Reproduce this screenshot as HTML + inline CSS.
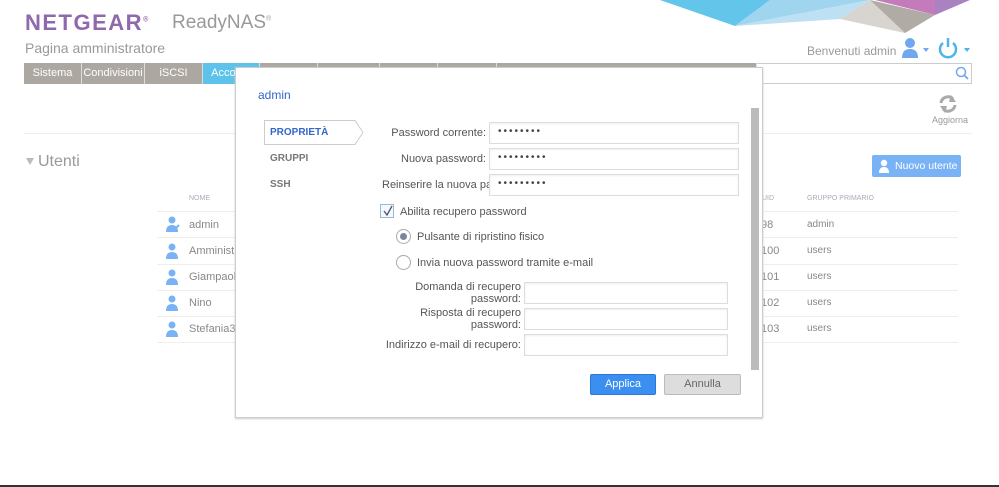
<!DOCTYPE html>
<html><head><meta charset="utf-8"><style>
*{margin:0;padding:0;box-sizing:border-box}
body{width:999px;height:487px;position:relative;overflow:hidden;background:#fff;font-family:"Liberation Sans",sans-serif;color:#777}
.a{position:absolute;white-space:nowrap}
.tab{position:absolute;top:63px;height:21px;background:#aca8a1;color:#fff;font-size:11px;line-height:21px;text-align:center;border-right:1px solid #ddd}
.hl{position:absolute;left:157px;width:801px;height:1px;background:#eee}
.rt{position:absolute;font-size:11px;color:#888}
.lbl{position:absolute;font-size:11px;color:#555;text-align:right;white-space:nowrap}
.inp{position:absolute;border:1px solid #ddd;background:#fff;box-shadow:inset 0 1px 2px #eee;font-size:10px;letter-spacing:2px;padding-left:8px;line-height:18px;color:#444}
.ui{position:absolute;left:166px;width:14px;height:16px}
</style></head><body>
<svg class="a" style="left:0;top:0" width="999" height="40">
<polygon points="660,0 770,0 735,26" fill="#64c5ea"/>
<polygon points="770,0 735,26 870,0" fill="#9fd5ef"/>
<polygon points="735,26 840,19 870,0" fill="#bde0f2"/>
<polygon points="840,19 905,33 870,0" fill="#d8d4cf"/>
<polygon points="870,0 905,33 935,15" fill="#b0aba5"/>
<polygon points="875,0 935,15 935,0" fill="#c37bbc"/>
<polygon points="935,0 935,15 970,0" fill="#a983c0"/>
</svg>
<div class="a" style="left:25px;top:10px;font-size:22px;font-weight:bold;color:#8e6aad;letter-spacing:1.5px">NETGEAR<sup style="font-size:7px">®</sup></div>
<div class="a" style="left:172px;top:12px;font-size:19px;color:#999">ReadyNAS<sup style="font-size:7px">®</sup></div>
<div class="a" style="left:25px;top:40px;font-size:14px;color:#999">Pagina amministratore</div>
<div class="a" style="left:807px;top:44px;font-size:12px;color:#999">Benvenuti admin</div>
<svg class="a" style="left:900px;top:36px" width="72" height="24"><circle cx="10" cy="7" r="5" fill="#6fa8ef"/><path d="M2 22 Q2 13 10 13 Q18 13 18 22Z" fill="#6fa8ef"/><polygon points="23,12 29,12 26,16" fill="#6fa8ef"/><path d="M43 7 A8 8 0 1 0 53 7" stroke="#4fb4ec" stroke-width="2.5" fill="none"/><line x1="48" y1="2" x2="48" y2="11" stroke="#4fb4ec" stroke-width="2.5"/><polygon points="64,12 70,12 67,16" fill="#4fb4ec"/></svg>
<div class="tab" style="left:24px;width:58px">Sistema</div>
<div class="tab" style="left:82px;width:63px">Condivisioni</div>
<div class="tab" style="left:145px;width:58px">iSCSI</div>
<div class="tab" style="left:203px;width:57px;background:#5dc3ea">Account</div>
<div class="tab" style="left:260px;width:58px"></div>
<div class="tab" style="left:318px;width:62px"></div>
<div class="tab" style="left:380px;width:58px"></div>
<div class="tab" style="left:438px;width:59px"></div>
<div class="tab" style="left:497px;width:260px"></div>
<div class="a" style="left:757px;top:63px;width:215px;height:21px;border:1px solid #ccc;border-left:none;background:#fff"></div>
<svg class="a" style="left:955px;top:66px" width="14" height="14"><circle cx="6" cy="6" r="4.5" stroke="#6fa8ef" stroke-width="1.5" fill="none"/><line x1="9" y1="9" x2="13" y2="13" stroke="#6fa8ef" stroke-width="1.8"/></svg>
<svg class="a" style="left:938px;top:94px" width="20" height="20"><path d="M3 9 A7 7 0 0 1 15 5" stroke="#aaa" stroke-width="3" fill="none"/><polygon points="13,1 18,8 11,8" fill="#aaa"/><path d="M17 11 A7 7 0 0 1 5 15" stroke="#aaa" stroke-width="3" fill="none"/><polygon points="7,19 2,12 9,12" fill="#aaa"/></svg>
<div class="a" style="left:932px;top:115px;font-size:9px;color:#999">Aggiorna</div>
<div class="a" style="left:24px;top:133px;width:948px;height:1px;background:#eee"></div>
<div class="a" style="left:26px;top:158px;width:0;height:0;border-left:4.5px solid transparent;border-right:4.5px solid transparent;border-top:7px solid #bbb"></div>
<div class="a" style="left:38px;top:153px;font-size:16px;color:#999">Utenti</div>
<div class="a" style="left:872px;top:155px;width:89px;height:22px;background:#7ab3f5;border-radius:2px;color:#fff;font-size:10.5px;line-height:22px;padding-left:23px">Nuovo utente</div>
<svg class="a" style="left:878px;top:159px" width="12" height="14"><circle cx="6" cy="4" r="3.2" fill="#fff"/><path d="M1 14 Q1 8 6 8 Q11 8 11 14Z" fill="#fff"/></svg>
<div class="rt" style="left:189px;top:195px;font-size:7px;color:#aab">NOME</div>
<div class="rt" style="left:762px;top:195px;font-size:7px;color:#aab">UID</div>
<div class="rt" style="left:807px;top:195px;font-size:7px;color:#aab">GRUPPO PRIMARIO</div>
<div class="hl" style="top:211px"></div><div class="hl" style="top:237px"></div><div class="hl" style="top:264px"></div><div class="hl" style="top:290px"></div><div class="hl" style="top:316px"></div><div class="hl" style="top:342px"></div>
<svg class="ui" style="top:216px"><circle cx="6" cy="4" r="3.5" fill="#7ab3f5"/><path d="M0 16 Q0 9 6 9 Q12 9 12 16Z" fill="#7ab3f5"/><path d="M8 14 L13 9" stroke="#7ab3f5" stroke-width="2"/></svg>
<svg class="ui" style="top:243px"><circle cx="6" cy="4" r="3.5" fill="#7ab3f5"/><path d="M0 16 Q0 9 6 9 Q12 9 12 16Z" fill="#7ab3f5"/></svg>
<svg class="ui" style="top:269px"><circle cx="6" cy="4" r="3.5" fill="#7ab3f5"/><path d="M0 16 Q0 9 6 9 Q12 9 12 16Z" fill="#7ab3f5"/></svg>
<svg class="ui" style="top:295px"><circle cx="6" cy="4" r="3.5" fill="#7ab3f5"/><path d="M0 16 Q0 9 6 9 Q12 9 12 16Z" fill="#7ab3f5"/></svg>
<svg class="ui" style="top:321px"><circle cx="6" cy="4" r="3.5" fill="#7ab3f5"/><path d="M0 16 Q0 9 6 9 Q12 9 12 16Z" fill="#7ab3f5"/></svg>
<div class="rt" style="left:189px;top:219px">admin</div><div class="rt" style="left:189px;top:245px">Amministratore</div><div class="rt" style="left:189px;top:271px">Giampaolo1</div><div class="rt" style="left:189px;top:297px">Nino</div><div class="rt" style="left:189px;top:323px">Stefania3</div>
<div class="rt" style="left:761px;top:219px">98</div><div class="rt" style="left:761px;top:245px">100</div><div class="rt" style="left:761px;top:271px">101</div><div class="rt" style="left:761px;top:297px">102</div><div class="rt" style="left:761px;top:323px">103</div>
<div class="rt" style="left:807px;top:219px;font-size:10px">admin</div><div class="rt" style="left:807px;top:245px;font-size:10px">users</div><div class="rt" style="left:807px;top:271px;font-size:10px">users</div><div class="rt" style="left:807px;top:297px;font-size:10px">users</div><div class="rt" style="left:807px;top:323px;font-size:10px">users</div>

<div class="a" style="left:235px;top:67px;width:528px;height:351px;background:#fff;border:1px solid #ccc;box-shadow:0 1px 2px #ccc;overflow:hidden">
<div class="a" style="left:22px;top:20px;font-size:12px;color:#3366cc">admin</div>
<svg class="a" style="left:28px;top:52px" width="102" height="26"><path d="M0.5 0.5 H91 L99 12.5 L91 24.5 H0.5Z" fill="#fff" stroke="#ccc"/></svg>
<div class="a" style="left:34px;top:59px;font-size:10px;font-weight:bold;color:#3366cc">PROPRIETÀ</div>
<div class="a" style="left:34px;top:85px;font-size:10px;font-weight:bold;color:#777">GRUPPI</div>
<div class="a" style="left:34px;top:111px;font-size:10px;font-weight:bold;color:#777">SSH</div>
<div class="lbl" style="right:276px;top:59px">Password corrente:</div>
<div class="lbl" style="right:276px;top:85px">Nuova password:</div>
<div class="lbl" style="left:146px;top:111px;width:108px;overflow:hidden;text-align:left">Reinserire la nuova password:</div>
<div class="inp" style="left:253px;top:54px;width:250px;height:22px">••••••••</div>
<div class="inp" style="left:253px;top:80px;width:250px;height:22px">•••••••••</div>
<div class="inp" style="left:253px;top:106px;width:250px;height:22px">•••••••••</div>
<div class="a" style="left:144px;top:136px;width:14px;height:14px;border:1px solid #9bc;background:#f4f8ff"></div>
<svg class="a" style="left:146px;top:137px" width="12" height="12"><path d="M2 6 L5 10 L10 1" stroke="#556" stroke-width="1.3" fill="none"/></svg>
<div class="lbl" style="left:164px;top:138px">Abilita recupero password</div>
<div class="a" style="left:160px;top:161px;width:15px;height:15px;border:1px solid #aaa;border-radius:50%;background:#fff"></div>
<div class="a" style="left:164px;top:165px;width:7px;height:7px;border-radius:50%;background:#7b869c"></div>
<div class="lbl" style="left:181px;top:163px">Pulsante di ripristino fisico</div>
<div class="a" style="left:160px;top:187px;width:15px;height:15px;border:1px solid #aaa;border-radius:50%;background:#fff"></div>
<div class="lbl" style="left:181px;top:189px">Invia nuova password tramite e-mail</div>
<div class="lbl" style="right:241px;top:213px;line-height:12px">Domanda di recupero<br>password:</div>
<div class="lbl" style="right:241px;top:239px;line-height:12px">Risposta di recupero<br>password:</div>
<div class="lbl" style="right:241px;top:271px">Indirizzo e-mail di recupero:</div>
<div class="inp" style="left:288px;top:214px;width:204px;height:22px"></div>
<div class="inp" style="left:288px;top:240px;width:204px;height:22px"></div>
<div class="inp" style="left:288px;top:266px;width:204px;height:22px"></div>
<div class="a" style="left:515px;top:40px;width:8px;height:262px;background:#bbb"></div>
<div class="a" style="left:354px;top:306px;width:66px;height:21px;background:#3b8ff0;border:1px solid #2a78d8;border-radius:2px;color:#fff;font-size:11px;line-height:19px;text-align:center">Applica</div>
<div class="a" style="left:428px;top:306px;width:77px;height:21px;background:#ddd;border:1px solid #bbb;border-radius:2px;color:#666;font-size:11px;line-height:19px;text-align:center">Annulla</div>
</div>
<div class="a" style="left:0;top:485px;width:999px;height:2px;background:#333"></div>
</body></html>
